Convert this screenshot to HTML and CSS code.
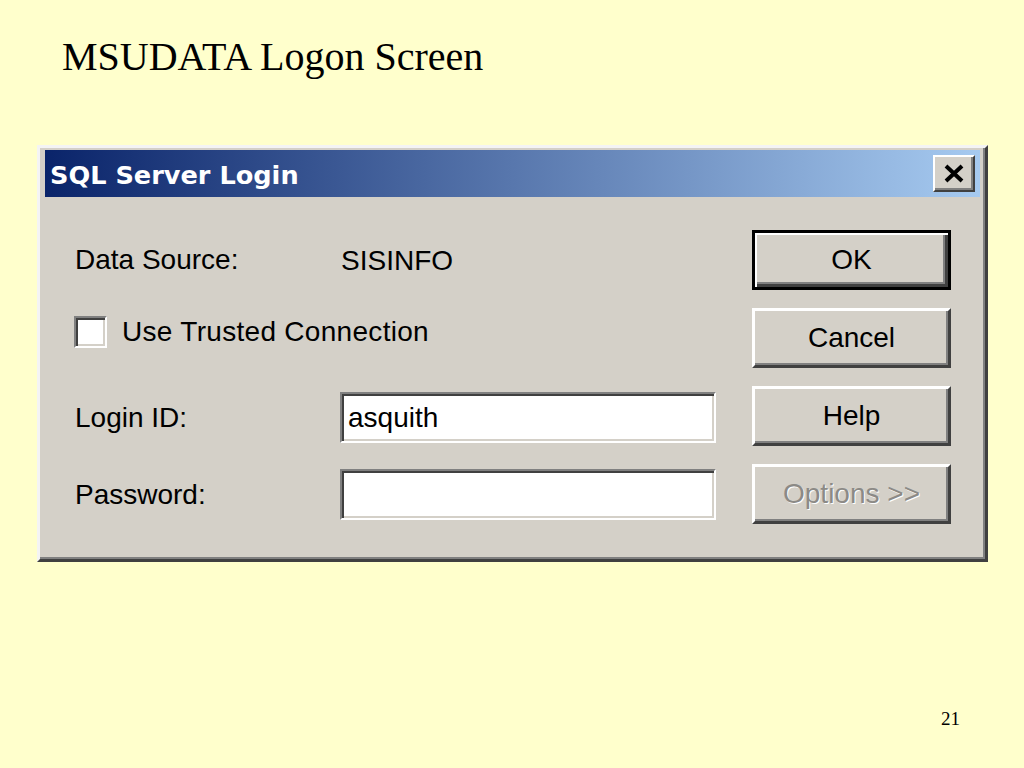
FILE: index.html
```html
<!DOCTYPE html>
<html lang="en">
<head>
    <meta charset="UTF-8">
    <meta name="viewport" content="width=device-width, initial-scale=1.0">
    <title>MSUDATA Logon Screen</title>
    <link rel="stylesheet" href="styles.css">
</head>
<body>
    <div class="slide">
        <h1>MSUDATA Logon Screen</h1>
        <div class="dialog">
            <div class="titlebar">
                <span class="title">SQL Server Login</span>
                <button class="close-btn">
                    <svg width="22" height="19" viewBox="0 0 22 19">
                        <path d="M3 2 L19 17 M19 2 L3 17" stroke="#000" stroke-width="4" fill="none"/>
                    </svg>
                </button>
            </div>
            <div class="dialog-body">
                <div class="form">
                    <div class="row row-source">
                        <span class="label">Data Source:</span>
                        <span class="value">SISINFO</span>
                    </div>
                    <div class="row row-check">
                        <span class="checkbox"></span>
                        <span class="check-label">Use Trusted Connection</span>
                    </div>
                    <div class="row row-field">
                        <span class="label">Login ID:</span>
                        <div class="textbox">asquith</div>
                    </div>
                    <div class="row row-field row-last">
                        <span class="label">Password:</span>
                        <div class="textbox"></div>
                    </div>
                </div>
                <div class="buttons">
                    <button class="btn btn-default">OK</button>
                    <button class="btn">Cancel</button>
                    <button class="btn">Help</button>
                    <button class="btn btn-disabled">Options &gt;&gt;</button>
                </div>
            </div>
        </div>
        <div class="page-num">21</div>
    </div>
</body>
</html>
```

FILE: styles.css
```css
* {
    box-sizing: border-box;
    margin: 0;
    padding: 0;
}
body {
    background-color: #ffffcc;
    font-family: "Liberation Sans", Arial, sans-serif;
    width: 1024px;
    height: 768px;
    overflow: hidden;
}
h1 {
    font-family: "Liberation Serif", "Times New Roman", serif;
    font-weight: normal;
    font-size: 40px;
    line-height: 40px;
    color: #000;
    margin: 37px 0 0 62px;
}
.dialog {
    width: 951px;
    margin: 68px 0 0 37px;
    background: #d4d0c8;
    border: 3px solid;
    border-color: #f4f4f4 #404040 #404040 #f4f4f4;
    box-shadow: inset -2px -2px 0 #808080;
    padding: 2px 5px 2px 5px;
}
.titlebar {
    height: 47px;
    display: flex;
    align-items: center;
    justify-content: space-between;
    padding: 0 5px;
    background: linear-gradient(to right, #0a246a, #a6caf0);
}
.title {
    font-family: "DejaVu Sans", Verdana, sans-serif;
    font-weight: bold;
    font-size: 25.6px;
    color: #fff;
    padding-top: 2px;
}
.close-btn {
    width: 42px;
    height: 37px;
    background: #d4d0c8;
    border: 2px solid;
    border-color: #fff #404040 #404040 #fff;
    box-shadow: inset -2px -2px 0 #808080;
    display: flex;
    align-items: center;
    justify-content: center;
}
.dialog-body {
    height: 360px;
    display: flex;
    padding: 33px 29px 0 30px;
    gap: 36px;
}
.form {
    width: 641px;
    font-size: 28px;
    color: #000;
}
.row {
    display: flex;
    align-items: center;
}
.row-source {
    height: 60px;
}
.row-check {
    height: 84px;
}
.row-field {
    height: 51px;
    margin-top: 18px;
}
.row-last {
    margin-top: 26px;
}
.label {
    width: 265px;
    flex-shrink: 0;
}
.value {
    padding-left: 1px;
    padding-top: 2px;
}
.checkbox {
    width: 33px;
    height: 32px;
    margin-left: -1px;
    margin-right: 15px;
    background: #fff;
    border: 2px solid;
    border-color: #808080 #fff #fff #808080;
    box-shadow: inset 2px 2px 0 #404040, inset -2px -2px 0 #d4d0c8;
}
.check-label {
    letter-spacing: 0.3px;
}
.textbox {
    width: 376px;
    height: 51px;
    background: #fff;
    border: 2px solid;
    border-color: #808080 #fff #fff #808080;
    box-shadow: inset 2px 2px 0 #404040, inset -2px -2px 0 #d4d0c8;
    padding: 0 6px;
    display: flex;
    align-items: center;
}
.buttons {
    width: 199px;
    display: flex;
    flex-direction: column;
    gap: 18px;
}
.btn {
    height: 60px;
    font-family: "Liberation Sans", Arial, sans-serif;
    font-size: 28px;
    color: #000;
    background: #d4d0c8;
    border: 3px solid;
    border-color: #fff #404040 #404040 #fff;
    box-shadow: inset -2px -2px 0 #808080;
}
.btn-default {
    border: 3px solid #000;
    box-shadow: inset 2px 2px 0 #fff, inset -3px -3px 0 #404040, inset -5px -5px 0 #808080;
}
.btn-disabled {
    color: #8c8a86;
    text-shadow: 1px 1px 0 #fff;
}
.page-num {
    font-family: "Liberation Serif", "Times New Roman", serif;
    font-size: 19px;
    line-height: 19px;
    text-align: right;
    padding-right: 64px;
    margin-top: 147px;
}
```
